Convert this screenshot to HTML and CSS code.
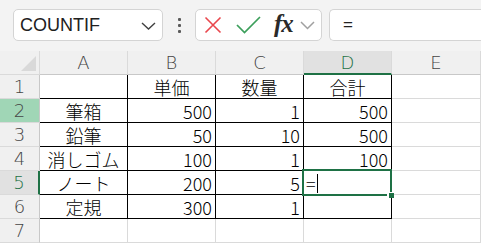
FILE: index.html
```html
<!DOCTYPE html>
<html lang="ja">
<head>
<meta charset="utf-8">
<title>Excel</title>
<link rel="stylesheet" href="styles.css">
</head>
<body>
<div class="toolbar">
  <div class="namebox">
    <span class="name">COUNTIF</span>
    <svg class="chev" width="15" height="8" viewBox="0 0 15 8"><path d="M1 1 L7.5 7 L14 1" fill="none" stroke="#404040" stroke-width="1.4"/></svg>
  </div>
  <div class="dots"><i></i><i></i><i></i></div>
  <div class="iconbox">
    <svg class="ic-x" width="18" height="18" viewBox="0 0 18 18"><path d="M1.5 1.5 L16.5 16.5 M16.5 1.5 L1.5 16.5" stroke="#e9474d" stroke-width="1.6" fill="none"/></svg>
    <svg class="ic-ok" width="25" height="18" viewBox="0 0 25 18"><path d="M1 9 L8.5 16.5 L24 1" stroke="#3c9f5b" stroke-width="1.7" fill="none"/></svg>
    <span class="fx">fx</span>
    <svg class="chev2" width="15" height="9" viewBox="0 0 15 9"><path d="M1 1 L7.5 7.5 L14 1" fill="none" stroke="#a0a0a0" stroke-width="1.5"/></svg>
  </div>
  <div class="formula">=</div>
</div>
<div class="sheet">
  <div class="corner"><span class="tri"></span></div>
  <div class="ch">A</div><div class="ch">B</div><div class="ch">C</div><div class="ch ch-act">D</div><div class="ch">E</div>

  <div class="rh">1</div>
  <div class="c b"></div><div class="c b ctr">単価</div><div class="c b ctr">数量</div><div class="c b ctr">合計</div><div class="c"></div>

  <div class="rh rh-hl">2</div>
  <div class="c b ctr">筆箱</div><div class="c b num">500</div><div class="c b num">1</div><div class="c b num">500</div><div class="c"></div>

  <div class="rh">3</div>
  <div class="c b ctr">鉛筆</div><div class="c b num">50</div><div class="c b num">10</div><div class="c b num">500</div><div class="c"></div>

  <div class="rh">4</div>
  <div class="c b ctr">消しゴム</div><div class="c b num">100</div><div class="c b num">1</div><div class="c b num">100</div><div class="c"></div>

  <div class="rh rh-act">5</div>
  <div class="c b ctr">ノート</div><div class="c b num">200</div><div class="c b num">5</div><div class="c b active"><span class="eq">=</span><span class="caret"></span><span class="handle"></span></div><div class="c"></div>

  <div class="rh">6</div>
  <div class="c b ctr">定規</div><div class="c b num">300</div><div class="c b num">1</div><div class="c b"></div><div class="c"></div>

  <div class="rh">7</div>
  <div class="c"></div><div class="c"></div><div class="c"></div><div class="c"></div><div class="c"></div>
</div>
</body>
</html>
```
FILE: styles.css
```css
html, body {
  margin: 0;
  padding: 0;
  background: #f3f3f3;
  overflow: hidden;
}
body {
  width: 481px;
  height: 243px;
  font-family: "Noto Sans CJK JP", "Liberation Sans", sans-serif;
}
.toolbar {
  height: 51px;
  box-sizing: border-box;
  padding: 9px 0 0 13px;
  display: flex;
  align-items: flex-start;
  background: #f3f3f3;
}
.namebox {
  width: 150px;
  height: 32px;
  box-sizing: border-box;
  background: #fff;
  border: 1px solid #d4d4d4;
  border-radius: 5px;
  display: flex;
  align-items: center;
  padding: 0 6px 0 6px;
}
.name {
  font-family: "Liberation Sans", sans-serif;
  font-size: 18px;
  color: #202020;
  flex: 1;
  letter-spacing: 0;
}
.chev { margin-top: 1px; }
.dots {
  width: 32px;
  height: 32px;
  display: flex;
  flex-direction: column;
  align-items: center;
  justify-content: center;
  gap: 3px;
}
.dots i {
  display: block;
  width: 3px;
  height: 3px;
  background: #5a5a5a;
  border-radius: 1px;
}
.iconbox {
  width: 127px;
  height: 32px;
  box-sizing: border-box;
  background: #fff;
  border: 1px solid #d4d4d4;
  border-radius: 5px;
  display: flex;
  align-items: center;
  padding-left: 8px;
}
.ic-x { margin-right: 14px; }
.ic-ok { margin-right: 13px; }
.fx {
  font-family: "Liberation Serif", serif;
  font-style: italic;
  font-weight: bold;
  font-size: 25px;
  color: #2a2a2a;
  line-height: 1;
  margin-right: 7px;
  margin-top: -3px;
  letter-spacing: -1px;
}
.chev2 { margin-top: 1px; }
.formula {
  margin-left: 7px;
  flex: 1;
  height: 32px;
  box-sizing: border-box;
  background: #fff;
  border: 1px solid #d4d4d4;
  border-right: none;
  border-radius: 5px 0 0 5px;
  padding-left: 13px;
  font-family: "Liberation Sans", sans-serif;
  font-size: 17px;
  line-height: 30px;
  color: #222;
}
.sheet {
  display: grid;
  grid-template-columns: 40px 88px 88px 88px 88px 89px;
  grid-auto-rows: 24px;
  background: #fff;
}
.sheet > div {
  box-sizing: border-box;
  border-right: 1px solid #dadada;
  border-bottom: 1px solid #dadada;
}
.corner {
  background: #f0f0f0;
  position: relative;
}
.tri {
  position: absolute;
  right: 3px;
  bottom: 3px;
  width: 0;
  height: 0;
  border-left: 15px solid transparent;
  border-bottom: 15px solid #d9d9d9;
}
.ch, .rh {
  background: #f0f0f0;
  display: flex;
  align-items: center;
  justify-content: center;
  font-family: "DejaVu Sans", sans-serif;
  font-weight: 200;
  font-size: 18px;
  color: #444;
}
.sheet > .ch { border-bottom-color: #c8c8c8; }
.sheet > .rh { border-right-color: #c8c8c8; }
.sheet > .ch-act {
  background: #e1e1e1;
  color: #1e7145;
  border-bottom: 2px solid #1e7145;
}
.sheet > .rh-hl { background: #a0d6b6; }
.sheet > .rh-act {
  background: #e1e1e1;
  color: #1e7145;
  border-right: 2px solid #1e7145;
}
.c {
  display: flex;
  align-items: flex-end;
  font-size: 18px;
  font-weight: 300;
  color: #000;
  line-height: 22px;
  padding-bottom: 0;
}
.sheet > .b {
  border-right-color: #000;
  border-bottom-color: #000;
}
.ctr { justify-content: center; }
.num { justify-content: flex-end; padding-right: 3px; }
.active {
  position: relative;
  padding-left: 2px;
}
.active::after {
  content: "";
  position: absolute;
  left: -2px;
  top: -2px;
  right: -1px;
  bottom: -2px;
  border: 2px solid #1e7145;
  pointer-events: none;
}
.eq {
  font-size: 18px;
}
.caret {
  display: inline-block;
  width: 1px;
  height: 19px;
  background: #000;
  margin-left: 1px;
  margin-bottom: 1px;
}
.handle {
  position: absolute;
  right: -3px;
  bottom: -4px;
  width: 5px;
  height: 5px;
  background: #1e7145;
  border-left: 2px solid #fff;
  border-top: 1px solid #fff;
  z-index: 2;
}
```
